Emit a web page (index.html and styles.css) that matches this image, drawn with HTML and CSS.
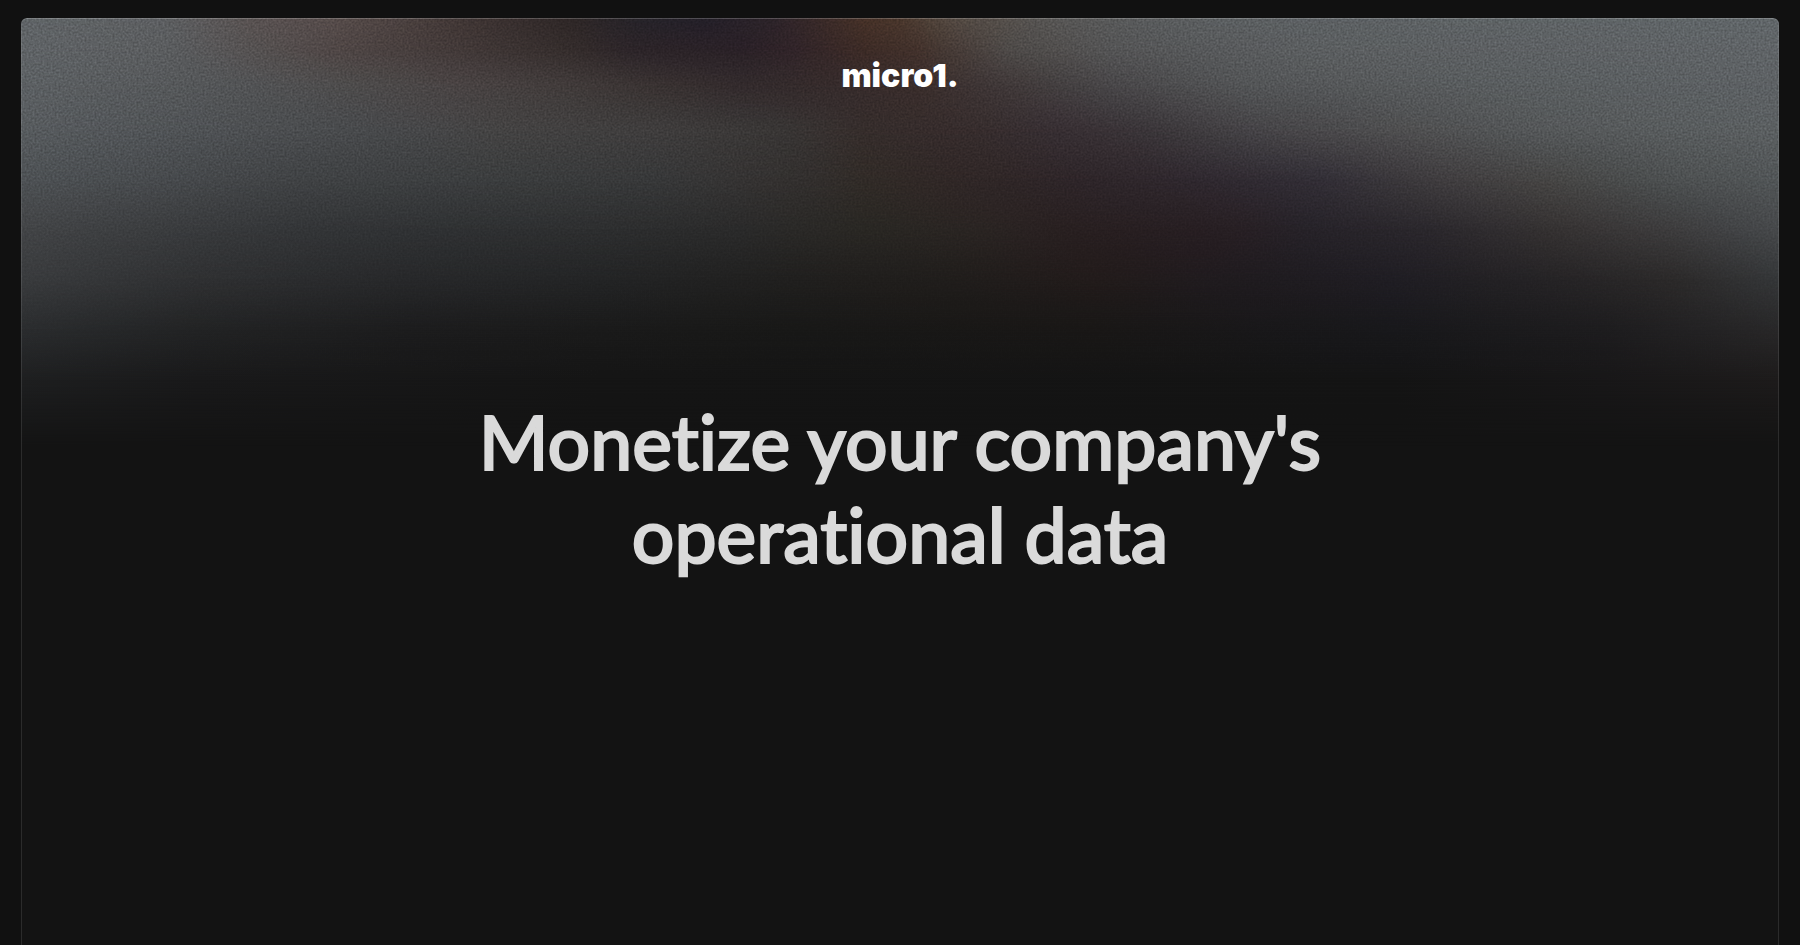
FILE: index.html
```html
<!DOCTYPE html>
<html lang="en">
<head>
<meta charset="utf-8">
<meta name="viewport" content="width=device-width, initial-scale=1">
<title>micro1</title>
<link rel="stylesheet" href="styles.css">
</head>
<body>
<main class="card">
  <div class="aurora" aria-hidden="true">
    <div class="band band-1"></div>
    <div class="band band-2"></div>
    <div class="band band-3"></div>
    <div class="band band-4"></div>
    <div class="band band-5"></div>
    <div class="band band-6"></div>
    <div class="band band-7"></div>
    <div class="band band-8"></div>
    <div class="band band-9"></div>
    <div class="band band-10"></div>
    <svg class="grain">
      <filter id="noise" x="0" y="0" width="100%" height="100%" color-interpolation-filters="sRGB">
        <feTurbulence type="fractalNoise" baseFrequency="0.5" numOctaves="2" seed="4"/>
        <feColorMatrix type="matrix" values="1 0 0 0 0  1 0 0 0 0  1 0 0 0 0  0 0 0 0 1"/>
      </filter>
      <rect width="100%" height="100%" filter="url(#noise)"/>
    </svg>
  </div>
  <header class="header">
    <a class="logo" href="#">micro1.</a>
  </header>
  <section class="hero">
    <h1 class="title">Monetize your company's<br>operational data</h1>
  </section>
</main>
</body>
</html>
```
FILE: styles.css
```css
* { box-sizing: border-box; }

body {
  margin: 0;
  min-height: 100vh;
  display: flex;
  padding: 18px 21px 0;
  background: #111111;
  color: #dadada;
  font-family: Lato, "Open Sans", sans-serif;
}

.card {
  position: relative;
  flex: 1;
  overflow: hidden;
  border-radius: 6px 6px 0 0;
  background: #131313;
}

/* Translucent outline drawn over the colour field. */
.card::after {
  content: "";
  position: absolute;
  inset: 0;
  border: 1px solid rgba(255, 255, 255, 0.1);
  border-top-color: rgba(255, 255, 255, 0.2);
  border-bottom: 0;
  border-radius: 6px 6px 0 0;
  pointer-events: none;
}

/* Horizontal colour rows, each faded into the next from top to bottom. */
.aurora {
  position: absolute;
  inset: 0 0 auto;
  height: 450px;
  filter: saturate(0.8);
}

.band {
  position: absolute;
  inset: 0;
  mask-image: linear-gradient(to bottom, transparent var(--from), #000 var(--to));
}

.band-1 {
  mask-image: none;
  background: linear-gradient(to right, #5f6468, #5c5f62 8%, #5a5251 13%, #584b49 18%, #433634 25%, #302726 31%, #27232a 35%, #241f2a 39%, #2f222a 43%, #4a3024 48%, #4d3528 50%, #55493f 53%, #575655 59%, #5a5f62 68%, #60666a);
}

.band-2 {
  --from: 0px; --to: 32px;
  background: linear-gradient(to right, #5e6367, #5a5d60 8%, #565252 13%, #514644 18%, #443937 25%, #362d2b 31%, #2d2429 35%, #2c2028 41%, #332329 44%, #402a24 48%, #453029 51%, #4e4946 56%, #545455 62%, #5a5e61 73%, #5f6468);
}

.band-3 {
  --from: 32px; --to: 67px;
  background: linear-gradient(to right, #5b6064, #54575a 10%, #4d4b4b 19%, #4a4343 25%, #423b3a 31%, #3a3231 36%, #342a2c 41%, #382a2b 47%, #3c2c2a 51%, #413838 56%, #484648 62%, #535557 70%, #585d60 84%, #5c6165);
}

.band-4 {
  --from: 67px; --to: 112px;
  background: linear-gradient(to right, #565b5f, #4e5256 10%, #484a4d 19%, #444343 27%, #3f3d3d 36%, #393635 43%, #372d2a 48%, #382b2b 53%, #392e33 59%, #3b3539 64%, #454347 70%, #4f4f50 79%, #54585a 87%, #5a5f62);
}

.band-5 {
  --from: 112px; --to: 162px;
  background: linear-gradient(to right, #4c5155, #474b4f 7%, #3f4245 16%, #3b3d3e 27%, #373839 36%, #343130 43%, #322b26 48%, #322725 53%, #302429 60%, #302830 67%, #332e37 74%, #403d3f 81%, #464544 87%, #4c5051 94%, #505558);
}

.band-6 {
  --from: 162px; --to: 212px;
  background: linear-gradient(to right, #424447, #3b3d40 7%, #333538 16%, #2f3133 24%, #2d2e2f 33%, #2a2a2a 41%, #2a2722 48%, #2b2421 55%, #2a1f20 60%, #291d22 67%, #272229 73%, #2b272d 80%, #353131 87%, #3d3c3d 94%, #45484b);
}

.band-7 {
  --from: 212px; --to: 262px;
  background: linear-gradient(to right, #393b3e, #2f3032 10%, #27282a 22%, #232425 33%, #201f1e 44%, #211d1a 53%, #231b1a 61%, #201b20 70%, #1f1d24 78%, #252325 87%, #2b2929 94%, #343638);
}

.band-8 {
  --from: 262px; --to: 312px;
  background: linear-gradient(to right, #2a2c2e, #222324 10%, #1c1c1d 22%, #181817 44%, #191716 61%, #18181c 78%, #1d1c1e 90%, #282728);
}

.band-9 {
  --from: 312px; --to: 362px;
  background: linear-gradient(to right, #1e1f20, #19191a 10%, #151515 33%, #141414 78%, #181718 90%, #1d1b1b);
}

.band-10 {
  --from: 362px; --to: 430px;
  background: #131313;
}

.grain {
  position: absolute;
  inset: 0;
  width: 100%;
  height: 100%;
  opacity: 0.25;
  mix-blend-mode: overlay;
  mask-image: linear-gradient(to bottom, #000 30%, transparent 80%);
}

.header {
  position: relative;
  display: flex;
  justify-content: center;
  padding-top: 38px;
}

.logo {
  color: #ffffff;
  font-family: Inter, Lato, sans-serif;
  font-size: 32px;
  font-weight: 900;
  line-height: 40px;
  text-decoration: none;
}

.hero {
  position: relative;
  padding: 299px 24px 0;
  text-align: center;
}

.title {
  margin: 0;
  font-size: 75px;
  font-weight: 500;
  line-height: 93px;
  font-variant-ligatures: none;
  -webkit-text-stroke: 2px #dadada;
}
```
